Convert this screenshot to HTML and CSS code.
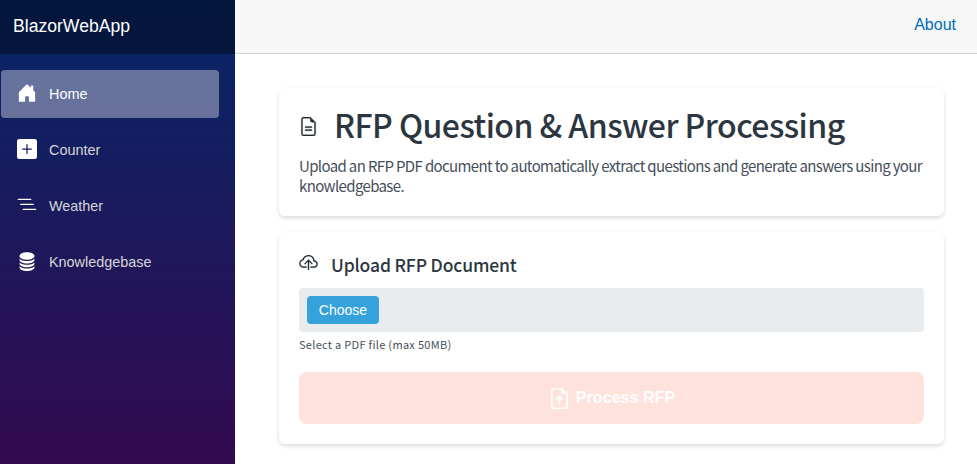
FILE: index.html
```html
<!DOCTYPE html>
<html lang="en">
<head>
<meta charset="utf-8">
<title>BlazorWebApp</title>
<link rel="stylesheet" href="styles.css">
</head>
<body>
<div class="page">
  <aside class="sidebar">
    <div class="brand-row"><span class="brand">BlazorWebApp</span></div>
    <nav class="nav">
      <a class="nav-link active"><svg class="nav-icon" viewBox="0 0 16 16"><path d="M6.5 14.5v-3.505c0-.245.25-.495.5-.495h2c.25 0 .5.25.5.5v3.5a.5.5 0 0 0 .5.5h4a.5.5 0 0 0 .5-.5v-7a.5.5 0 0 0-.146-.354L13 5.793V2.5a.5.5 0 0 0-.5-.5h-1a.5.5 0 0 0-.5.5v1.293L8.354 1.146a.5.5 0 0 0-.708 0l-6 6A.5.5 0 0 0 1.5 7.5v7a.5.5 0 0 0 .5.5h4a.5.5 0 0 0 .5-.5Z"/></svg>Home</a>
      <a class="nav-link"><svg class="nav-icon" viewBox="0 0 16 16"><path d="M2 0a2 2 0 0 0-2 2v12a2 2 0 0 0 2 2h12a2 2 0 0 0 2-2V2a2 2 0 0 0-2-2H2zm6.5 4.5v3h3a.5.5 0 0 1 0 1h-3v3a.5.5 0 0 1-1 0v-3h-3a.5.5 0 0 1 0-1h3v-3a.5.5 0 0 1 1 0z"/></svg>Counter</a>
      <a class="nav-link"><svg class="nav-icon" viewBox="0 0 16 16"><path fill-rule="evenodd" d="M4.5 11.5A.5.5 0 0 1 5 11h10a.5.5 0 0 1 0 1H5a.5.5 0 0 1-.5-.5zm-2-4A.5.5 0 0 1 3 7h10a.5.5 0 0 1 0 1H3a.5.5 0 0 1-.5-.5zm-2-4A.5.5 0 0 1 1 3h10a.5.5 0 0 1 0 1H1a.5.5 0 0 1-.5-.5z"/></svg>Weather</a>
      <a class="nav-link"><svg class="nav-icon" viewBox="0 0 16 16"><path d="M3.904 1.777C4.978 1.289 6.427 1 8 1s3.022.289 4.096.777C13.125 2.245 14 2.993 14 4s-.875 1.755-1.904 2.223C11.022 6.711 9.573 7 8 7s-3.022-.289-4.096-.777C2.875 5.755 2 5.007 2 4s.875-1.755 1.904-2.223Z"/><path d="M2 6.161V7c0 1.007.875 1.755 1.904 2.223C4.978 9.71 6.427 10 8 10s3.022-.289 4.096-.777C13.125 8.755 14 8.007 14 7v-.839c-.457.432-1.004.751-1.49.972C11.278 7.693 9.682 8 8 8s-3.278-.307-4.51-.867c-.486-.22-1.033-.54-1.49-.972Z"/><path d="M2 9.161V10c0 1.007.875 1.755 1.904 2.223C4.978 12.711 6.427 13 8 13s3.022-.289 4.096-.777C13.125 11.755 14 11.007 14 10v-.839c-.457.432-1.004.751-1.49.972-1.232.56-2.828.867-4.51.867s-3.278-.307-4.51-.867c-.486-.22-1.033-.54-1.49-.972Z"/><path d="M2 12.161V13c0 1.007.875 1.755 1.904 2.223C4.978 15.711 6.427 16 8 16s3.022-.289 4.096-.777C13.125 14.755 14 14.007 14 13v-.839c-.457.432-1.004.751-1.49.972-1.232.56-2.828.867-4.51.867s-3.278-.307-4.51-.867c-.486-.22-1.033-.54-1.49-.972Z"/></svg>Knowledgebase</a>
    </nav>
  </aside>
  <main class="main">
    <header class="top-row"><a class="about">About</a></header>
    <div class="content">
      <section class="card">
        <h1 class="title"><svg class="title-icon" viewBox="0 0 16 16"><path d="M5.5 8a.5.5 0 0 0 0 1h5a.5.5 0 0 0 0-1h-5zM5.5 10.5a.5.5 0 0 0 0 1h5a.5.5 0 0 0 0-1h-5z"/><path d="M9.5 0H4a2 2 0 0 0-2 2v12a2 2 0 0 0 2 2h8a2 2 0 0 0 2-2V4.5L9.5 0zm0 1v2A1.5 1.5 0 0 0 11 4.5h2V14a1 1 0 0 1-1 1H4a1 1 0 0 1-1-1V2a1 1 0 0 1 1-1h5.5z"/></svg>RFP Question &amp; Answer Processing</h1>
        <p class="lead">Upload an RFP PDF document to automatically extract questions and generate answers using your knowledgebase.</p>
      </section>
      <section class="card upload">
        <h2 class="subtitle"><svg class="cloud-icon" viewBox="0 0 16 13"><path d="M4.406 1.342A5.53 5.53 0 0 1 8 0c2.69 0 4.923 2 5.166 4.579C14.758 4.804 16 6.137 16 7.773 16 9.569 14.502 11 12.687 11H10a.5.5 0 0 1 0-1h2.688C13.979 10 15 8.988 15 7.773c0-1.216-1.02-2.228-2.313-2.228h-.5v-.5C12.188 2.825 10.328 1 8 1a4.53 4.53 0 0 0-2.941 1.1c-.757.652-1.153 1.438-1.153 2.055v.448l-.445.049C2.064 4.805 1 5.952 1 7.318 1 8.785 2.23 10 3.781 10H6a.5.5 0 0 1 0 1H3.781C1.708 11 0 9.366 0 7.318c0-1.763 1.266-3.223 2.942-3.593.143-.863.698-1.723 1.464-2.383z"/><path d="M7.646 4.146a.5.5 0 0 1 .708 0l3 3a.5.5 0 0 1-.708.708L8.5 5.707V12.5a.5.5 0 0 1-1 0V5.707L5.354 7.854a.5.5 0 1 1-.708-.708l3-3z"/></svg>Upload RFP Document</h2>
        <div class="file-box"><span class="choose">Choose</span></div>
        <p class="hint">Select a PDF file (max 50MB)</p>
        <div class="process"><svg class="process-icon" viewBox="2 0 12 16" preserveAspectRatio="none"><path d="M8.5 11.5a.5.5 0 0 1-1 0V7.707L6.354 8.854a.5.5 0 1 1-.708-.708l2-2a.5.5 0 0 1 .708 0l2 2a.5.5 0 0 1-.708.708L8.5 7.707V11.5z"/><path d="M14 14V4.5L9.5 0H4a2 2 0 0 0-2 2v12a2 2 0 0 0 2 2h8a2 2 0 0 0 2-2zM9.5 3A1.5 1.5 0 0 0 11 4.5h2V14a1 1 0 0 1-1 1H4a1 1 0 0 1-1-1V2a1 1 0 0 1 1-1h5.5z"/></svg>Process RFP</div>
      </section>
    </div>
  </main>
</div>
</body>
</html>
```
FILE: styles.css
```css
* { box-sizing: border-box; }
html, body { margin: 0; height: 464px; overflow: hidden; }
body { font-family: "Noto Sans CJK SC", "Liberation Sans", sans-serif; background: #fff; color: #212b36; }
.page { display: flex; height: 464px; }
.sidebar { width: 235px; flex: none; height: 464px; background: linear-gradient(180deg, #052767 0%, #330a50 100%); font-family: "Liberation Sans", Arial, sans-serif; }
.brand-row { height: 54px; background: rgba(0,0,0,.4); display: flex; align-items: center; padding: 0 0 2px 13px; }
.brand { color: #fff; font-size: 17.6px; line-height: 26px; }
.nav { display: flex; flex-direction: column; gap: 8px; padding: 16px 16px 0 1px; }
.nav-link { height: 48px; display: flex; align-items: center; padding-left: 16px; border-radius: 4px; color: #d7d7d7; font-size: 14.4px; }
.nav-link.active { background: rgba(255,255,255,.37); color: #fff; }
.nav-icon { width: 20px; height: 20px; margin-right: 12px; fill: #fff; flex: none; position: relative; top: -1px; }
.main { flex: 1; min-width: 0; }
.top-row { height: 54px; background: #f7f7f7; border-bottom: 1px solid #d6d5d5; display: flex; align-items: center; justify-content: flex-end; padding: 0 21px 3px 0; }
.about { color: #006bb7; font-family: "Liberation Sans", Arial, sans-serif; font-size: 16px; }
.content { padding: 34px 33px 0 44px; display: flex; flex-direction: column; gap: 16px; }
.card { background: #fff; border-radius: 6px; box-shadow: 0 2px 4px rgba(0,0,0,.15); padding: 17px 20px 20px; }
.title { margin: 0; display: flex; align-items: center; font-size: 32px; line-height: 38px; font-weight: 500; letter-spacing: -.53px; color: #2b3640; white-space: nowrap; }
.title-icon { width: 19px; height: 19px; margin-right: 16px; fill: #212b36; stroke: #212b36; stroke-width: .3; flex: none; position: relative; top: 2px; }
.lead { margin: 13px 0 0; font-size: 15px; line-height: 20px; letter-spacing: -.64px; color: #454f5b; }
.upload { padding-top: 20px; height: 212px; }
.subtitle { margin: 0; display: flex; align-items: center; font-size: 17.5px; line-height: 26px; font-weight: 500; letter-spacing: -.15px; color: #2b3640; }
.cloud-icon { width: 19px; height: 15px; margin-right: 13px; fill: #212b36; stroke: #212b36; stroke-width: .2; flex: none; position: relative; top: -3px; }
.file-box { height: 44px; margin-top: 10px; background: #e9ecef; border-radius: 4px; display: flex; align-items: center; padding-left: 8px; }
.choose { width: 72px; height: 28px; background: #36a2db; color: #fff; border-radius: 4px; display: flex; align-items: center; justify-content: center; font-family: "Liberation Sans", Arial, sans-serif; font-size: 14px; }
.hint { margin: 4px 0 0; font-size: 11px; line-height: 16px; color: #454f5b; letter-spacing: .3px; }
.process { height: 52px; margin-top: 20px; padding-left: 3px; background: #ffe2db; border-radius: 8px; display: flex; align-items: center; justify-content: center; color: #fff; font-family: "Liberation Sans", Arial, sans-serif; font-size: 16px; font-weight: 700; letter-spacing: .05px; }
.process-icon { width: 17px; height: 21px; margin-right: 8px; fill: #fff; stroke: #fff; stroke-width: .4; flex: none; }
```
